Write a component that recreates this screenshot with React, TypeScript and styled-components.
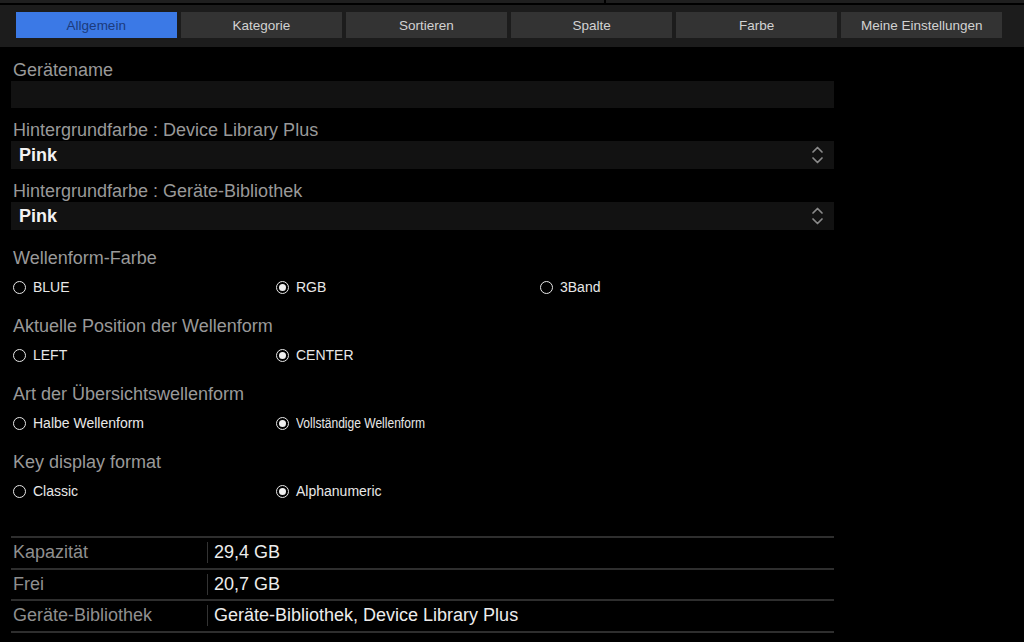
import React from 'react'
import styled, { createGlobalStyle } from 'styled-components'

const GlobalStyle = createGlobalStyle`
  html, body {
    margin: 0;
    padding: 0;
    background: #000;
  }
  body {
    font-family: "Liberation Sans", Arial, sans-serif;
    width: 1024px;
    height: 642px;
    overflow: hidden;
  }
`;

const Page = styled.div`
  width: 1024px;
  height: 642px;
  background: #000;
  display: flex;
  flex-direction: column;
  & > * {
    flex-shrink: 0;
  }
`;

const TopStrip = styled.div`
  height: 3px;
  display: flex;
  border-bottom: 2px solid #000;
`;

const StripPart = styled.div<{ $w?: number }>`
  background: #1f1f1f;
  height: 100%;
  ${p => p.$w ? `width: ${p.$w}px;` : 'flex: 1;'}
  & + & {
    margin-left: 2px;
  }
`;

const TabBar = styled.div`
  height: 42px;
  background: #1c1c1c;
  display: flex;
  align-items: flex-start;
  gap: 4.6px;
  padding: 7px 16px 0;
  box-sizing: border-box;
`;

const Tab = styled.div<{ $active?: boolean }>`
  width: 160.5px;
  height: 26px;
  display: flex;
  align-items: center;
  justify-content: center;
  font-size: 13.5px;
  background: ${p => p.$active ? '#3b79e6' : '#333333'};
  color: ${p => p.$active ? '#1c3b7c' : '#d2d2d2'};
`;

const Content = styled.div`
  width: 823px;
  margin-left: 11px;
  display: flex;
  flex-direction: column;
  padding-top: 13px;
  & > * {
    flex-shrink: 0;
  }
`;

const Label = styled.div<{ $gap?: number }>`
  height: 20px;
  line-height: 20px;
  font-size: 18px;
  color: #999999;
  padding-left: 2px;
  margin-bottom: ${p => p.$gap ?? 1}px;
`;

const Field = styled.div`
  margin-bottom: 12px;
`;

const TextBox = styled.div`
  height: 27px;
  background: #121212;
`;

const SelectBox = styled.div`
  height: 28px;
  background: #121212;
  display: flex;
  align-items: center;
  justify-content: space-between;
  padding: 0 10px 0 8px;
  font-size: 18px;
  font-weight: bold;
  color: #f2f2f2;
`;

const Group = styled.div<{ $first?: boolean }>`
  margin-top: ${p => p.$first ? 6 : 0}px;
  margin-bottom: 19px;
`;

const RadioRow = styled.div`
  display: grid;
  grid-template-columns: 263px 264px 264px;
  height: 20px;
  align-items: center;
  padding-left: 2px;
`;

const RadioItem = styled.div`
  display: flex;
  align-items: center;
  gap: 7px;
  font-size: 14px;
  color: #e8e8e8;
  white-space: nowrap;
`;

const NarrowText = styled.span`
  display: inline-block;
  transform: scaleX(0.86);
  transform-origin: left center;
`;

const Circle = styled.span<{ $checked?: boolean }>`
  width: 13px;
  height: 13px;
  flex-shrink: 0;
  box-sizing: border-box;
  border-radius: 50%;
  border: 1.6px solid #e8e8e8;
  display: inline-flex;
  align-items: center;
  justify-content: center;
  &::after {
    content: '';
    display: ${p => p.$checked ? 'block' : 'none'};
    width: 7px;
    height: 7px;
    border-radius: 50%;
    background: #f0f0f0;
  }
`;

const InfoTable = styled.div`
  margin-top: 16px;
  border-top: 2px solid #2e2e2e;
`;

const InfoRow = styled.div`
  height: 29.5px;
  display: flex;
  align-items: center;
  border-bottom: 2px solid #2e2e2e;
  font-size: 18px;
`;

const InfoKey = styled.div`
  width: 196px;
  padding-left: 2px;
  box-sizing: border-box;
  color: #8f8f8f;
  flex-shrink: 0;
`;

const InfoValue = styled.div`
  border-left: 1px solid #333;
  height: 21px;
  line-height: 21px;
  padding-left: 6px;
  color: #ececec;
`;

const Chevrons = () => (
  <svg width="13" height="22" viewBox="0 0 13 22" fill="none" stroke="#8a8a8a" strokeWidth="1.7" strokeLinecap="round" strokeLinejoin="round">
    <polyline points="2,8 6.5,3.5 11,8" />
    <polyline points="2,14 6.5,18.5 11,14" />
  </svg>
);

type RadioOption = { label: string, checked?: boolean, narrow?: boolean };

const Radio = ({ label, checked, narrow }: RadioOption) => (
  <RadioItem>
    <Circle $checked={checked} />
    {narrow ? <NarrowText>{label}</NarrowText> : label}
  </RadioItem>
);

const tabs = ['Allgemein', 'Kategorie', 'Sortieren', 'Spalte', 'Farbe', 'Meine Einstellungen'];

const radioGroups: { title: string, options: RadioOption[] }[] = [
  { title: 'Wellenform-Farbe', options: [{ label: 'BLUE' }, { label: 'RGB', checked: true }, { label: '3Band' }] },
  { title: 'Aktuelle Position der Wellenform', options: [{ label: 'LEFT' }, { label: 'CENTER', checked: true }] },
  { title: 'Art der Übersichtswellenform', options: [{ label: 'Halbe Wellenform' }, { label: 'Vollständige Wellenform', checked: true, narrow: true }] },
  { title: 'Key display format', options: [{ label: 'Classic' }, { label: 'Alphanumeric', checked: true }] },
];

const info = [
  ['Kapazität', '29,4 GB'],
  ['Frei', '20,7 GB'],
  ['Geräte-Bibliothek', 'Geräte-Bibliothek, Device Library Plus'],
];

export default function App() {
  return (
    <Page>
      <GlobalStyle />
      <TopStrip>
        <StripPart $w={604} />
        <StripPart />
      </TopStrip>
      <TabBar>
        {tabs.map((t, i) => <Tab key={t} $active={i === 0}>{t}</Tab>)}
      </TabBar>
      <Content>
        <Field>
          <Label>Gerätename</Label>
          <TextBox />
        </Field>
        <Field>
          <Label>Hintergrundfarbe : Device Library Plus</Label>
          <SelectBox>Pink<Chevrons /></SelectBox>
        </Field>
        <Field>
          <Label>Hintergrundfarbe : Geräte-Bibliothek</Label>
          <SelectBox>Pink<Chevrons /></SelectBox>
        </Field>
        {radioGroups.map((g, i) => (
          <Group key={g.title} $first={i === 0}>
            <Label $gap={9}>{g.title}</Label>
            <RadioRow>
              {g.options.map(o => <Radio key={o.label} {...o} />)}
            </RadioRow>
          </Group>
        ))}
        <InfoTable>
          {info.map(([k, v]) => (
            <InfoRow key={k}>
              <InfoKey>{k}</InfoKey>
              <InfoValue>{v}</InfoValue>
            </InfoRow>
          ))}
        </InfoTable>
      </Content>
    </Page>
  );
}
